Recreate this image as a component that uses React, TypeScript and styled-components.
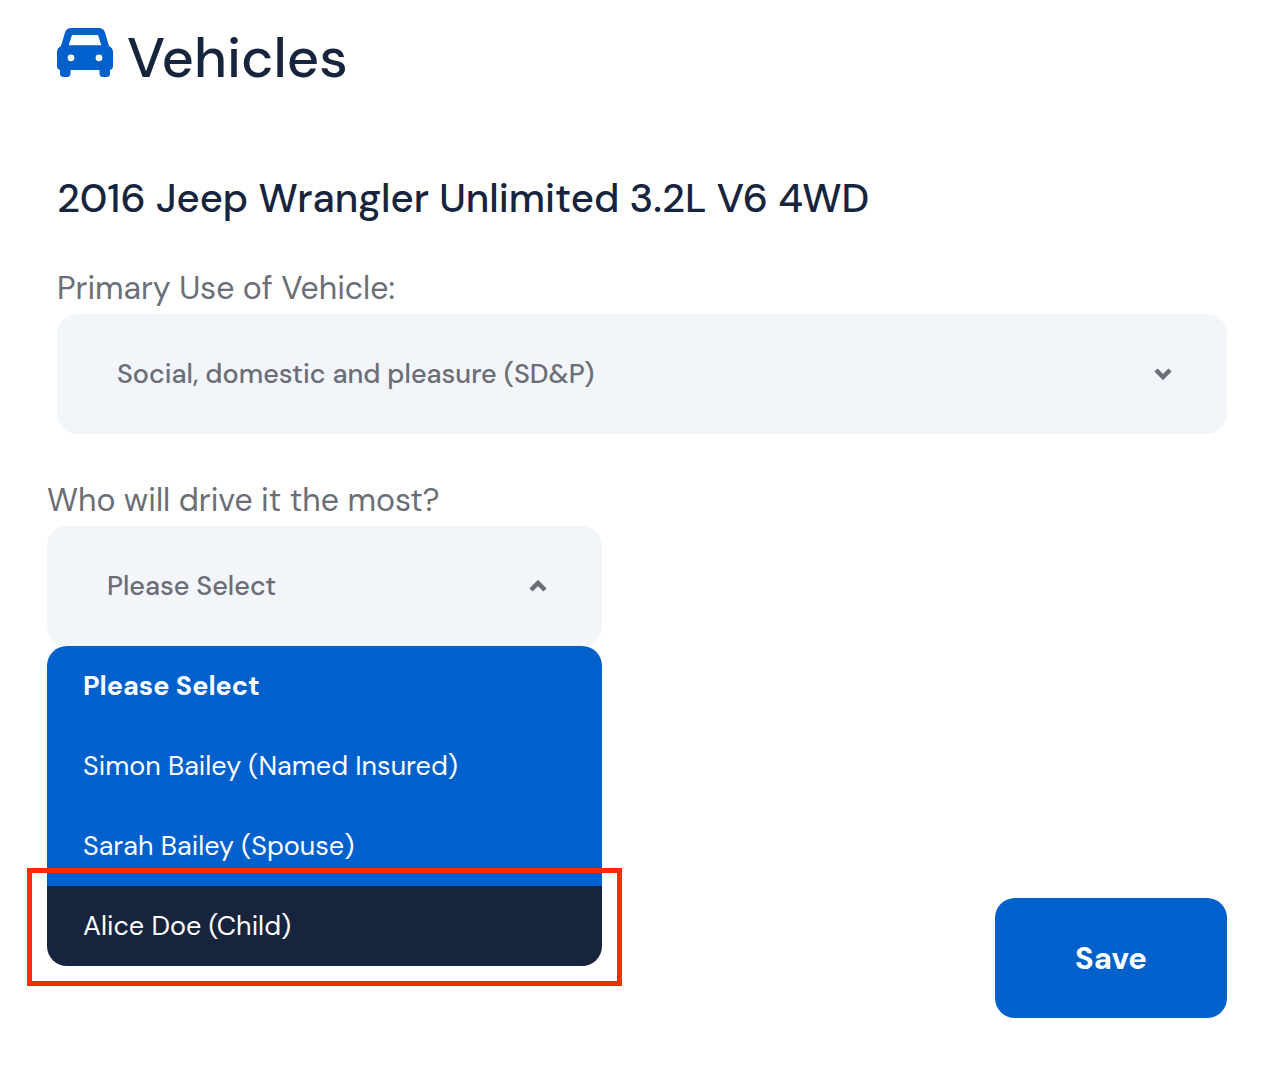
import React, { useState } from "react";
import styled, { createGlobalStyle } from "styled-components";

const GlobalStyle = createGlobalStyle`
  * { box-sizing: border-box; }
  body {
    margin: 0;
    background: #ffffff;
    color: #17243d;
    font-family: "DM Sans", Inter, "Open Sans", sans-serif;
  }
  button, select { font-family: inherit; }
`;

const Page = styled.main`
  padding: 20px 47px 52px 57px;
`;

const Title = styled.h1`
  display: flex;
  align-items: center;
  gap: 14px;
  margin: 0;
  font-size: 56px;
  line-height: 76px;
  font-weight: 500;
`;

const CarIcon = styled.svg`
  flex: none;
  width: 56px;
  height: 49px;
  margin-bottom: 12px;
`;

const VehicleName = styled.h2`
  margin: 72px 0 34px;
  font-size: 40px;
  line-height: 60px;
  font-weight: 500;
`;

const Field = styled.div`
  position: relative;
  display: flex;
  flex-direction: column;
`;

const Label = styled.label`
  font-size: 32px;
  line-height: 52px;
  color: #6b6e76;
`;

const Control = styled.div`
  display: grid;
  align-items: center;
  > * { grid-area: 1 / 1; }
`;

const Select = styled.select`
  appearance: none;
  width: 100%;
  height: 120px;
  padding: 0 100px 2px 60px;
  border: 0;
  border-radius: 20px;
  background: #f2f5fa;
  color: #6b6e76;
  font-size: 27px;
  font-weight: 500;
  outline: none;
  cursor: pointer;
`;

const Chevron = styled.svg<{ $open?: boolean }>`
  justify-self: end;
  width: 18px;
  height: 12px;
  margin-right: 55px;
  pointer-events: none;
  transform: ${(p) => (p.$open ? "rotate(180deg)" : "none")};
`;

const DriverRow = styled.div`
  display: grid;
  grid-template-columns: 1fr 1fr;
  gap: 70px;
  margin: 40px 0 0 -10px;
`;

const Menu = styled.div`
  position: absolute;
  top: 100%;
  left: 0;
  right: 0;
  z-index: 1;
`;

const Option = styled.button<{ $active: boolean; $chosen: boolean }>`
  display: block;
  width: 100%;
  height: 80px;
  padding: 0 36px 2px;
  border: 0;
  background: ${(p) => (p.$active ? "#17243d" : "#0060cc")};
  color: #ffffff;
  font-size: 27px;
  font-weight: ${(p) => (p.$chosen ? 700 : 400)};
  text-align: left;
  cursor: pointer;
  &:first-child { border-radius: 20px 20px 0 0; }
  &:nth-child(4) { border-radius: 0 0 20px 20px; }
`;

const Highlight = styled.div`
  position: absolute;
  inset: auto -20px -20px;
  height: 118px;
  border: 5px solid #ff2a00;
  pointer-events: none;
`;

const Actions = styled.div`
  display: flex;
  justify-content: flex-end;
  margin-top: 252px;
`;

const SaveButton = styled.button`
  height: 120px;
  padding: 0 80px;
  border: 0;
  border-radius: 20px;
  background: #0060cc;
  color: #ffffff;
  font-size: 31px;
  font-weight: 700;
  cursor: pointer;
`;

const drivers = [
  "Please Select",
  "Simon Bailey (Named Insured)",
  "Sarah Bailey (Spouse)",
  "Alice Doe (Child)",
];

function Arrow({ open }: { open?: boolean }) {
  return (
    <Chevron $open={open} viewBox="0 0 18 12" fill="none" stroke="#6b6e76" strokeWidth="4.5" aria-hidden="true">
      <path d="M2 2 9 9l7-7" />
    </Chevron>
  );
}

export default function App() {
  const [driver, setDriver] = useState(drivers[0]);
  const [active, setActive] = useState(3);
  const [open, setOpen] = useState(true);

  return (
    <>
      <GlobalStyle />
      <Page>
        <Title>
          <CarIcon viewBox="0 0 56 49" aria-hidden="true">
            <path
              fill="#0060cc"
              fillRule="evenodd"
              d="M14 0H42Q46.500 0 48 4.500L52 18Q56 20 56 24V38Q56 41 53 42V45.500Q53 49 49.500 49H46Q42.500 49 42.500 45.500V42H13.500V45.500Q13.500 49 10 49H6.500Q3 49 3 45.500V42Q0 41 0 38V24Q0 20 4 18L8 4.500Q9.500 0 14 0ZM15 7 11.700 17.300H44.300L41 7ZM14 26.400A3.400 3.400 0 1 0 14 33.200A3.400 3.400 0 1 0 14 26.400ZM42 26.400A3.400 3.400 0 1 0 42 33.200A3.400 3.400 0 1 0 42 26.400Z"
            />
          </CarIcon>
          Vehicles
        </Title>
        <VehicleName>2016 Jeep Wrangler Unlimited 3.2L V6 4WD</VehicleName>
        <Field>
          <Label htmlFor="primary-use">Primary Use of Vehicle:</Label>
          <Control>
            <Select id="primary-use">
              <option>Social, domestic and pleasure (SD&amp;P)</option>
            </Select>
            <Arrow />
          </Control>
        </Field>
        <DriverRow>
          <Field>
            <Label htmlFor="main-driver">Who will drive it the most?</Label>
            <Control>
              <Select
                id="main-driver"
                value={driver}
                onChange={(e) => setDriver(e.target.value)}
                onMouseDown={(e) => {
                  e.preventDefault();
                  setOpen(!open);
                }}
              >
                {drivers.map((name) => (
                  <option key={name}>{name}</option>
                ))}
              </Select>
              <Arrow open={open} />
            </Control>
            {open && (
              <Menu role="listbox" aria-label="Who will drive it the most?">
                {drivers.map((name, i) => (
                  <Option
                    key={name}
                    type="button"
                    role="option"
                    aria-selected={name === driver}
                    $active={i === active}
                    $chosen={name === driver}
                    onMouseEnter={() => setActive(i)}
                    onClick={() => {
                      setDriver(name);
                      setOpen(false);
                    }}
                  >
                    {name}
                  </Option>
                ))}
                <Highlight />
              </Menu>
            )}
          </Field>
        </DriverRow>
        <Actions>
          <SaveButton type="button">Save</SaveButton>
        </Actions>
      </Page>
    </>
  );
}
